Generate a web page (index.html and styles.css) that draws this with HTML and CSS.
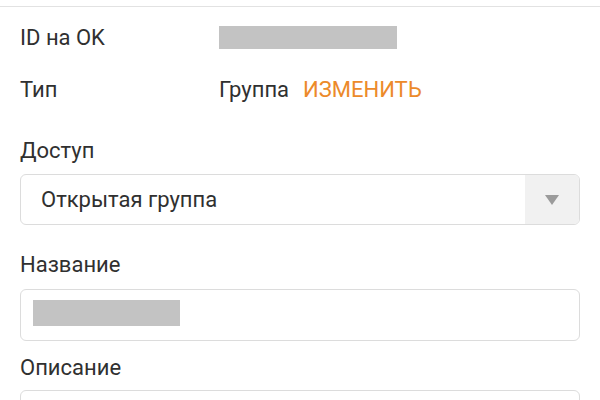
FILE: index.html
```html
<!DOCTYPE html>
<html lang="ru">
<head>
<meta charset="utf-8">
<title>Настройки группы</title>
<link rel="stylesheet" href="styles.css">
</head>
<body>
<div class="topbar"></div>
<div class="form">
  <div class="info-row row-id">
    <div class="info-label">ID на OK</div>
    <div class="redacted redacted-id"></div>
  </div>
  <div class="info-row row-type">
    <div class="info-label">Тип</div>
    <div class="info-value">Группа</div>
    <a class="change-link">ИЗМЕНИТЬ</a>
  </div>

  <div class="field field-access">
    <div class="field-label">Доступ</div>
    <div class="select">
      <div class="select-value">Открытая группа</div>
      <div class="select-arrow"><span class="triangle"></span></div>
    </div>
  </div>

  <div class="field field-name">
    <div class="field-label">Название</div>
    <div class="input">
      <div class="redacted redacted-name"></div>
    </div>
  </div>

  <div class="field field-desc">
    <div class="field-label">Описание</div>
    <div class="input input-tall"></div>
  </div>
</div>
</body>
</html>
```

FILE: styles.css
```css
html, body {
  margin: 0;
  padding: 0;
  background: #ffffff;
}
body {
  font-family: Roboto, "Liberation Sans", sans-serif;
  font-size: 22px;
  line-height: 24px;
  color: #303030;
  overflow: hidden;
  height: 400px;
}
.topbar {
  height: 6px;
  border-bottom: 1px solid #e2e2e2;
}
.form {
  padding: 0 20px;
}
.info-row {
  display: flex;
  align-items: flex-start;
  height: 24px;
}
.row-id {
  margin-top: 19px;
}
.row-type {
  margin-top: 28px;
}
.info-label {
  width: 199px;
  flex: none;
}
.redacted {
  background: #c3c3c3;
}
.redacted-id {
  width: 178px;
  height: 23px;
}
.change-link {
  color: #ec8a2a;
  margin-left: 14px;
}
.field-label {
  height: 24px;
}
.field-access {
  margin-top: 37px;
}
.field-name {
  margin-top: 28px;
}
.field-desc {
  margin-top: 15px;
}
.select {
  margin-top: 11px;
  height: 51px;
  box-sizing: border-box;
  border: 1px solid #dcdcdc;
  border-radius: 6px;
  display: flex;
  align-items: stretch;
  overflow: hidden;
}
.select-value {
  flex: 1;
  padding-left: 20px;
  display: flex;
  align-items: center;
}
.select-arrow {
  width: 54px;
  background: #f1f1f1;
  display: flex;
  align-items: center;
  justify-content: center;
}
.triangle {
  width: 0;
  height: 0;
  border-left: 7px solid transparent;
  border-right: 7px solid transparent;
  border-top: 10px solid #9b9b9b;
}
.input {
  margin-top: 12px;
  height: 52px;
  box-sizing: border-box;
  border: 1px solid #dcdcdc;
  border-radius: 6px;
  padding: 10px 12px;
}
.field-desc .input {
  margin-top: 10px;
}
.redacted-name {
  width: 147px;
  height: 26px;
}
.input-tall {
  height: 80px;
}
```
